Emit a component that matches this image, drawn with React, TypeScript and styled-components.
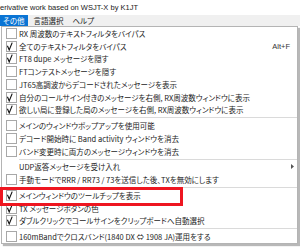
import React from "react";
import styled, { createGlobalStyle } from "styled-components";

const Global = createGlobalStyle`
  html, body { margin: 0; padding: 0; background: #fff; }
  body {
    font-family: "Noto Sans CJK JP", "Noto Sans", sans-serif;
    font-feature-settings: "palt" 1;
    color: #1c1c1c;
  }
`;

const Root = styled.div`
  position: relative;
  width: 300px;
  height: 247px;
  overflow: hidden;
  background: #fff;
`;

const TitleBar = styled.div`
  height: 15px;
  display: flex;
  align-items: center;
  font-family: "Liberation Sans", Arial, sans-serif;
  font-size: 7.5px;
  color: #1a1a1a;
  white-space: nowrap;
  background: #fff;
`;

const MenuBar = styled.div`
  height: 11px;
  display: flex;
  align-items: stretch;
  background: #f0f0f0;
  font-size: 7.5px;
  line-height: 11px;
`;

const MenuItem = styled.div<{ $active?: boolean }>`
  padding: 0 3px;
  margin-right: 3px;
  color: ${(p) => (p.$active ? "#fff" : "#1c1c1c")};
  background: ${(p) => (p.$active ? "#0a74d4" : "transparent")};
`;

const Dropdown = styled.div`
  margin-left: 1px;
  width: 297px;
  box-sizing: border-box;
  border: 1px solid #b4b4b4;
  background: #fff;
  box-shadow: 2px 2px 1px rgba(0, 0, 0, 0.28);
`;

const Row = styled.div`
  height: 12.75px;
  display: flex;
  align-items: center;
  padding: 0 7px 0 4px;
  white-space: nowrap;
  font-size: 7.5px;
`;

const Box = styled.span<{ $none?: boolean }>`
  flex: none;
  width: 11px;
  height: 11px;
  box-sizing: border-box;
  border: 1px solid ${(p) => (p.$none ? "transparent" : "#a8a8a8")};
  display: flex;
`;

const Label = styled.span`
  flex: 1;
  margin-left: 2px;
`;

const Shortcut = styled.span`
  font-family: "Liberation Sans", Arial, sans-serif;
  font-size: 7.5px;
  color: #333;
`;

const Arrow = styled.svg`
  margin-right: -4px;
`;

const Sep = styled.div`
  height: 3px;
  display: flex;
  align-items: center;
  padding-left: 17px;
  &::after {
    content: "";
    flex: 1;
    height: 1px;
    background: #dadada;
  }
`;

const Highlight = styled.div`
  position: absolute;
  left: 0;
  top: 187px;
  width: 183px;
  height: 19px;
  box-sizing: border-box;
  border: 3px solid #ee1620;
  pointer-events: none;
`;

type Item =
  | { kind: "item"; text: string; check: "on" | "off" | "none"; shortcut?: string; sub?: boolean }
  | { kind: "sep" };

const items: Item[] = [
  { kind: "item", text: "RX 周波数のテキストフィルタをバイパス", check: "off" },
  { kind: "item", text: "全てのテキストフィルタをバイパス", check: "on", shortcut: "Alt+F" },
  { kind: "item", text: "FT8 dupe メッセージを隠す", check: "on" },
  { kind: "item", text: "FTコンテストメッセージを隠す", check: "off" },
  { kind: "item", text: "JT65高調波からデコードされたメッセージを表示", check: "off" },
  { kind: "item", text: "自分のコールサイン付きのメッセージを右側, RX周波数ウィンドウに表示", check: "on" },
  { kind: "item", text: "欲しい局に登録した局のメッセージを右側, RX周波数ウィンドウに表示", check: "on" },
  { kind: "sep" },
  { kind: "item", text: "メインのウィンドウポップアップを使用可能", check: "off" },
  { kind: "item", text: "デコード開始時に Band activity ウィンドウを消去", check: "off" },
  { kind: "item", text: "バンド変更時に両方のメッセージウィンドウを消去", check: "off" },
  { kind: "sep" },
  { kind: "item", text: "UDP返答メッセージを受け入れ", check: "none", sub: true },
  { kind: "item", text: "手動モードでRRR / RR73 / 73を送信した後、TXを無効にします", check: "off" },
  { kind: "sep" },
  { kind: "item", text: "メインウィンドウのツールチップを表示", check: "on" },
  { kind: "item", text: "TX メッセージボタンの色", check: "on" },
  { kind: "item", text: "ダブルクリックでコールサインをクリップボードへ自動選択", check: "on" },
  { kind: "sep" },
  { kind: "item", text: "160mBandでクロスバンド(1840 DX ⇔ 1908 JA)運用をする", check: "off" },
];

const Check = () => (
  <svg width="9" height="9" viewBox="0 0 9 9">
    <path d="M0.4 3.8 L2.2 7.9 L5.2 0.6" fill="none" stroke="#111" strokeWidth="1.15" />
  </svg>
);

export default function App() {
  return (
    <Root>
      <Global />
      <TitleBar>erivative work based on WSJT-X by K1JT</TitleBar>
      <MenuBar>
        <MenuItem $active>その他</MenuItem>
        <MenuItem>言語選択</MenuItem>
        <MenuItem>ヘルプ</MenuItem>
      </MenuBar>
      <Dropdown>
        {items.map((it, i) =>
          it.kind === "sep" ? (
            <Sep key={i} />
          ) : (
            <Row key={i}>
              <Box $none={it.check === "none"}>{it.check === "on" && <Check />}</Box>
              <Label>{it.text}</Label>
              {it.shortcut && <Shortcut>{it.shortcut}</Shortcut>}
              {it.sub && (
                <Arrow width="3" height="5" viewBox="0 0 3 5">
                  <path d="M0 0 L3 2.5 L0 5 Z" fill="#555" />
                </Arrow>
              )}
            </Row>
          )
        )}
      </Dropdown>
      <Highlight />
    </Root>
  );
}
